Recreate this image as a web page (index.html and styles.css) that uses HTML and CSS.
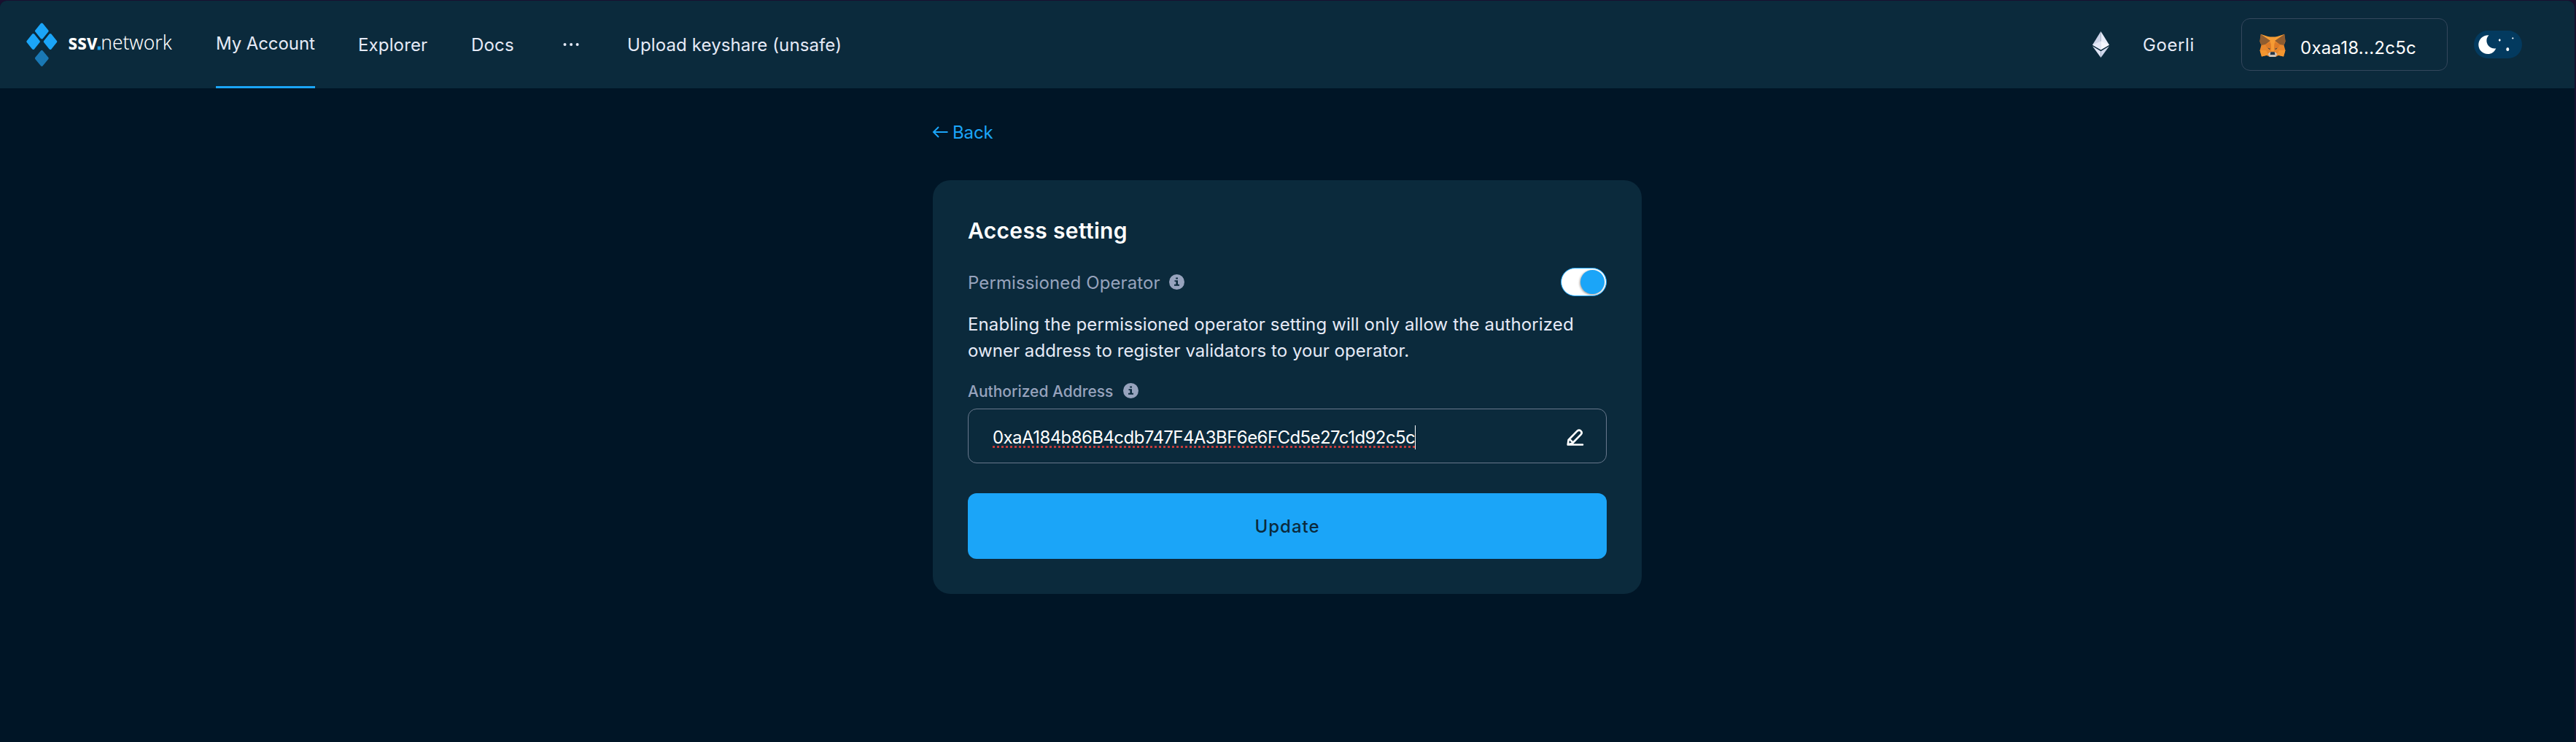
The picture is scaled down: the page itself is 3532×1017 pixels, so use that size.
FILE: index.html
```
<!DOCTYPE html>
<html lang="en">
<head>
<meta charset="utf-8">
<title>ssv.network - Access setting</title>
<link rel="stylesheet" href="styles.css">
</head>
<body>
<div class="app">
  <header class="header">
    <svg class="logo" width="202" height="64" viewBox="0 0 202 64" aria-label="ssv.network">
      <g class="logo-mark">
        <path d="M21.3 4.2 29 13.5 21.3 22.8 13.6 13.5Z"/>
        <path d="M9.6 18.7 17.2 28 9.6 37.3 2 28Z"/>
        <path d="M33 18.7 40.6 28 33 37.3 25.4 28Z"/>
        <path class="logo-shade" d="M21.3 41.5 29 50.8 21.3 60.1 13.6 50.8Z"/>
      </g>
      <text class="logo-bold" x="57.5" y="39.4" textLength="40" lengthAdjust="spacingAndGlyphs">ssv</text>
      <rect class="logo-dot" x="97.7" y="34.5" width="4.3" height="4.9"/>
      <text class="logo-light" x="102.2" y="39.4" textLength="97.5" lengthAdjust="spacingAndGlyphs">network</text>
    </svg>
    <nav class="nav">
      <a class="nav-item account">My Account</a>
      <a class="nav-item explorer">Explorer</a>
      <a class="nav-item docs">Docs</a>
      <a class="nav-item more"><svg width="22" height="6" viewBox="0 0 22 6"><circle cx="2.5" cy="3" r="2"/><circle cx="11.1" cy="3" r="2"/><circle cx="19.6" cy="3" r="2"/></svg></a>
      <a class="nav-item upload">Upload keyshare (unsafe)</a>
    </nav>
    <div class="tools">
      <svg class="eth" width="23" height="36" viewBox="0 0 23 36">
        <path fill="#ced4e9" d="M11.5 0 0 18.6 11.5 25.3Z"/>
        <path fill="#e9ecf9" d="M11.5 0 23 18.6 11.5 25.3Z"/>
        <path fill="#e5e9f8" d="M11.5 13.5 0 18.6 11.5 25.3Z"/>
        <path fill="#f5f6fe" d="M11.5 13.5 23 18.6 11.5 25.3Z"/>
        <path fill="#dfe4f5" d="M0 20.3 11.5 27.2V36Z"/>
        <path fill="#d0d7eb" d="M23 20.3 11.5 27.2V36Z"/>
      </svg>
      <span class="network">Goerli</span>
      <button class="wallet">
        <svg width="36" height="32" viewBox="0 0 36 32">
          <path fill="#e8872c" d="M2 1 12 5H24L34 1 35.5 11 33.5 16 35.5 23 33 31.5 26 30 22 32H14L10 30 3 31.5.5 23 2.5 16 .5 11Z"/>
          <path fill="#f69b34" d="M12 4.5H24L20 15V24H16V15Z"/>
          <path fill="#8f5c30" d="M1.7.6 15 9.7 8 15 2.5 16 .4 10Z"/>
          <path fill="#8f5c30" d="M34.3.6 21 9.7 28 15 33.5 16 35.6 10Z"/>
          <path fill="#f89f35" d="M2 1 14 4.8 15 9.7ZM34 1 22 4.8 21 9.7Z"/>
          <path fill="#dc7a27" d="M8 15 15 12 16 22 10 19ZM28 15 21 12 20 22 26 19Z"/>
          <path fill="#f4962f" d="M.5 23H9L12 29 3 31.5ZM35.5 23H27L24 29 33 31.5Z"/>
          <path fill="#2f3e4a" d="M11 19.5 14.6 20.8 14 22.3ZM25 19.5 21.4 20.8 22 22.3Z"/>
          <path fill="#cfc2b5" d="M11.5 28 14.5 25.5H21.5L24.5 28 22 32H14Z"/>
          <path fill="#233447" d="M15.3 25.3H20.7L21.3 29H14.7Z"/>
        </svg>
        <span>0xaa18...2c5c</span>
      </button>
      <svg class="theme" width="66" height="38" viewBox="0 0 66 38">
        <rect width="66" height="38" rx="19" fill="#033a5f"/>
        <path fill="#fff" d="M20.5 6.2C15.5 11 17 19 22 22.5 24.5 24.3 27.5 24.8 30.3 24.2 28.3 29.2 24 32 19.2 32 11.9 32 6.3 26.2 6.3 19.2 6.3 11.8 12.5 5.8 20.5 6.2Z"/>
        <path fill="#fff" d="M35.3 11 36.9 13 35.3 15 33.7 13ZM53.3 9 54.6 10.4 53.3 11.8 52 10.4Z"/>
        <ellipse cx="46.3" cy="25.5" rx="2" ry="2.5" fill="#fff"/>
      </svg>
    </div>
  </header>

  <main class="main">
    <a class="back">
      <svg width="21" height="16" viewBox="0 0 21 16"><path d="M20.5 8H1M8 1 1 8 8 15"/></svg>
      <span>Back</span>
    </a>
    <section class="card">
      <h1 class="title">Access setting</h1>
      <div class="permission">
        <span class="permission-label">Permissioned Operator</span>
        <svg class="info" width="21" height="21" viewBox="0 0 21 21"><circle cx="10.5" cy="10.5" r="10.5"/><path d="M9.2 4.5H12V6.5H9.2ZM7.5 8.3H12V13.8H14V15.7H7V13.8H9.4V10.1H7.5Z"/></svg>
        <span class="switch"><span class="knob"></span></span>
      </div>
      <p class="text"><span class="line-a">Enabling the permissioned operator setting will only allow the authorized</span><br>owner address to register validators to your operator.</p>
      <div class="field-head">
        <span class="field-label">Authorized Address</span>
        <svg class="info" width="21" height="21" viewBox="0 0 21 21"><circle cx="10.5" cy="10.5" r="10.5"/><path d="M9.2 4.5H12V6.5H9.2ZM7.5 8.3H12V13.8H14V15.7H7V13.8H9.4V10.1H7.5Z"/></svg>
      </div>
      <div class="field">
        <span class="address">0xaA184b86B4cdb747F4A3BF6e6FCd5e27c1d92c5c</span>
        <svg class="pencil" width="24" height="24" viewBox="0 0 24 24"><path d="M1.7 21.5 2.6 15 14.6 2.7Q17 .6 19.4 2.6 21.9 4.9 19.8 7.3L8 19.5 1.7 21.5H22M4.5 14.3 8.8 18.6"/></svg>
      </div>
      <button class="update">Update</button>
    </section>
  </main>
</div>
</body>
</html>
```
FILE: styles.css
```
* { box-sizing: border-box; }

html {
  background: #001526;
  overflow: hidden;
}

body {
  margin: 0;
  padding: 1px 2px 0 0;
  height: 1017px;
  background: #19102f;
  font-family: Inter, "Liberation Sans", sans-serif;
  font-size: 24px;
  color: #e6eaf7;
}

button {
  font: inherit;
  color: inherit;
  background: none;
  border: 0;
  padding: 0;
}

svg { display: block; flex: none; overflow: visible; }

.app {
  height: 1016px;
  background: #001526;
  border-radius: 9px 9px 0 0;
}

.header {
  display: flex;
  align-items: center;
  height: 120px;
  padding: 0 72px 0 36px;
  background: #0b2a3c;
  border-radius: 9px 9px 0 0;
}

.logo-mark { fill: #1ba5f8; stroke: #1ba5f8; stroke-width: 3.4; stroke-linejoin: round; }
.logo-mark .logo-shade { fill: #1a78b4; stroke: #1a78b4; }
.logo-dot { fill: #1ba5f8; }
.logo-bold { font: 700 28px "Noto Sans", sans-serif; fill: #fff; }
.logo-light { font: 300 28px "Noto Sans", sans-serif; fill: #fff; }

.nav {
  display: flex;
  gap: 58px;
  margin-left: 58px;
  height: 100%;
}

.nav-item {
  display: flex;
  align-items: center;
  white-space: nowrap;
  padding-top: 1px;
}

.account {
  width: 136px;
  letter-spacing: -0.09px;
  padding: 0;
  border-bottom: 3px solid #1ba5f8;
}
.explorer { width: 98px; padding-left: 1px; letter-spacing: 0.14px; }
.docs { width: 59px; letter-spacing: 0.19px; }
.more { width: 39px; padding: 0 0 0 9px; }
.more svg { fill: #e6eaf7; }
.upload { letter-spacing: 0.12px; }

.tools {
  display: flex;
  align-items: center;
  margin-left: auto;
}

.network {
  width: 74px;
  margin: 1px 61px 0 46px;
  letter-spacing: 0.6px;
}

.wallet {
  display: flex;
  align-items: center;
  width: 283px;
  height: 72px;
  margin-right: 36px;
  padding: 1px 0 0 24px;
  gap: 20px;
  border: 1px solid #34475c;
  border-radius: 12px;
  color: #fff;
  letter-spacing: 0.25px;
}
.wallet span { padding-top: 7px; }

.main {
  width: 972px;
  margin-left: 1279px;
  padding-top: 45px;
}

.back {
  display: flex;
  align-items: center;
  gap: 6px;
  height: 30px;
  margin-bottom: 51px;
  color: #1ba5f8;
  letter-spacing: -0.1px;
}
.back svg { fill: none; stroke: #1ba5f8; stroke-width: 2; }
.back span { padding-top: 1px; }

.card {
  height: 567px;
  padding: 48px;
  border-radius: 24px;
  background: #0b2a3c;
}

.title {
  margin: 0 0 29px;
  font-size: 30px;
  font-weight: 600;
  line-height: 43px;
  letter-spacing: 0.35px;
  color: #fff;
}

.permission {
  display: flex;
  align-items: center;
  height: 39px;
  color: #97a3bd;
}
.permission-label {
  width: 276px;
  padding-top: 2px;
  letter-spacing: 0.12px;
}

.info { fill: #97a3bd; }
.info path { fill: #0b2a3c; }

.switch {
  display: flex;
  align-items: center;
  justify-content: flex-end;
  width: 63px;
  height: 39px;
  margin-left: auto;
  padding-right: 2px;
  border: 1px solid #1ba5f8;
  border-radius: 20px;
  background: #fff;
}
.knob {
  width: 33px;
  height: 33px;
  border-radius: 50%;
  background: #1ba5f8;
  box-shadow: -1px 1px 3px rgba(0, 0, 0, 0.4);
}

.text {
  margin: 21px 0 26px;
  line-height: 36px;
  letter-spacing: 0.05px;
  white-space: nowrap;
}
.line-a { letter-spacing: 0.13px; }

.field-head {
  display: flex;
  align-items: center;
  height: 21px;
  margin-bottom: 14px;
}
.field-label {
  width: 213px;
  padding-top: 2px;
  font-size: 21px;
  font-weight: 500;
  color: #97a3bd;
}

.field {
  display: flex;
  align-items: center;
  justify-content: space-between;
  height: 75px;
  margin-bottom: 41px;
  padding: 0 30px 0 33px;
  border: 1px solid #68788c;
  border-radius: 12px;
}

.address {
  position: relative;
  margin-top: 4px;
  height: 33px;
  line-height: 33px;
  letter-spacing: -0.57px;
  color: #fff;
}
.address::before {
  content: "";
  position: absolute;
  left: 0;
  top: 28px;
  width: 579px;
  height: 3px;
  background: repeating-linear-gradient(90deg, #c23b3b 0 3px, transparent 3px 6px);
}
.address::after {
  content: "";
  position: absolute;
  left: 579px;
  top: 0;
  width: 1px;
  height: 33px;
  background: #fff;
}

.pencil {
  margin-top: 4px;
  fill: none;
  stroke: #fff;
  stroke-width: 2.6;
  stroke-linejoin: round;
  stroke-linecap: round;
}

.update {
  display: block;
  width: 876px;
  height: 90px;
  border-radius: 12px;
  background: #1ba5f8;
  color: #0b2a3c;
  font-weight: 500;
  letter-spacing: 1px;
}
```
